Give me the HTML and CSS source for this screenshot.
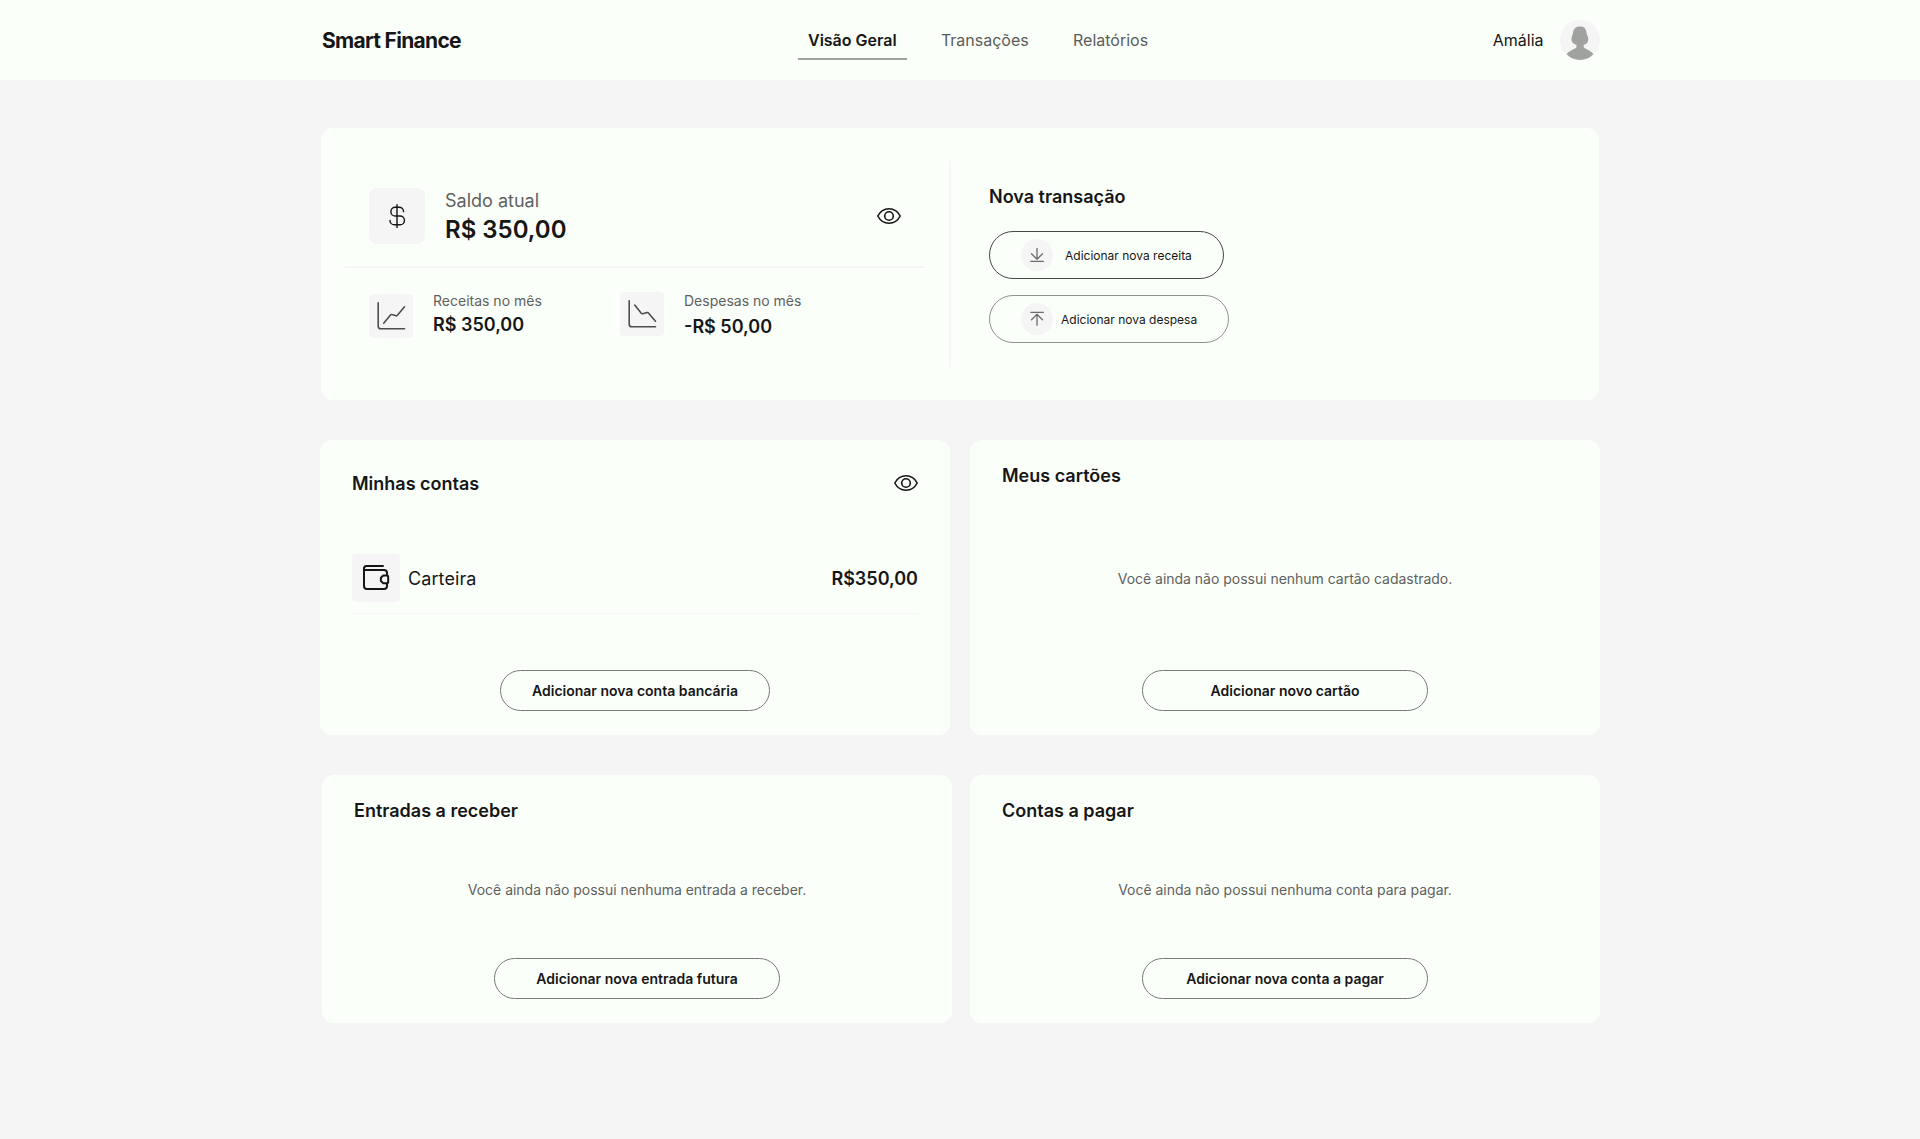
FILE: index.html
```html
<!DOCTYPE html>
<html lang="pt-BR">
<head>
  <meta charset="utf-8">
  <title>Smart Finance</title>
  <link rel="stylesheet" href="styles.css">
</head>
<body>
  <header class="topbar">
    <div class="topbar-inner">
      <div class="brand">Smart Finance</div>
      <nav class="nav">
        <a class="nav-link active">Visão Geral</a>
        <a class="nav-link">Transações</a>
        <a class="nav-link">Relatórios</a>
      </nav>
      <div class="user">
        <span>Amália</span>
        <svg class="avatar" width="40" height="40" viewBox="0 0 40 40">
          <circle cx="20" cy="20" r="20" fill="#f5f5f5"/>
          <path fill="#9fa29e" d="M19.6 6.6c3.600-.5 6.200 1.500 6.700 5 .2 1.800.6 3.300 1.500 5 .9 2.200.7 4.400-.5 6.200-.8 1.100-2 1.800-3.600 2v1.600c0 1 .7 1.700 1.700 2.200l4.100 2.200c1.700.8 3 1.900 3.900 3.500A20 20 0 0 1 20 40 20 20 0 0 1 6.600 34.300c.9-1.600 2.300-2.700 4-3.500l4.300-2.200c1-.5 1.600-1.200 1.600-2.200v-1.600c-1.600-.2-2.900-.9-3.800-2-1.400-1.900-1.600-4.100-.8-6.200.8-1.800 1-3.200 1.300-5 .5-3 2.900-5.100 6.400-5z"/>
        </svg>
      </div>
    </div>
  </header>

  <main class="page">
    <section class="card summary">
      <div class="overview">
        <div class="balance">
          <div class="tile tile-lg">
            <svg width="28" height="28" viewBox="0 0 256 256" fill="none" stroke="#161616" stroke-width="13" stroke-linecap="round" stroke-linejoin="round">
              <path d="M128 24v208M188 88a40 40 0 0 0-40-40h-36a40 40 0 0 0 0 80h44a40 40 0 0 1 0 80h-52a40 40 0 0 1-40-40"/>
            </svg>
          </div>
          <div class="balance-text">
            <div class="balance-label">Saldo atual</div>
            <div class="balance-value">R$ 350,00</div>
          </div>
          <svg class="eye" width="24" height="16" viewBox="0 0 24 16" fill="none" stroke="#161616" stroke-width="1.600">
            <path d="M.8 8C3.200 3.400 7.200.8 12 .8S20.800 3.400 23.200 8C20.800 12.600 16.800 15.200 12 15.200S3.200 12.600.8 8z" stroke-linejoin="round"/>
            <circle cx="12" cy="8" r="4.300"/>
          </svg>
        </div>
        <div class="stats">
          <div class="stat stat-income">
            <div class="tile tile-md">
              <svg width="44" height="44" viewBox="0 0 44 44" fill="none" stroke="#4c4e4b" stroke-width="1.600" stroke-linecap="round" stroke-linejoin="round">
                <path d="M9.200 8.700v23.500a2.600 2.600 0 0 0 2.600 2.600h23.700"/>
                <path d="M14.700 29.200l6.800-8.200q.6-.7 1.500-.4l4 1.200q.8.200 1.400-.5l7.100-8.500"/>
              </svg>
            </div>
            <div class="stat-text">
              <div class="stat-label">Receitas no mês</div>
              <div class="stat-value">R$ 350,00</div>
            </div>
          </div>
          <div class="stat stat-expense">
            <div class="tile tile-md">
              <svg width="44" height="44" viewBox="0 0 44 44" fill="none" stroke="#4c4e4b" stroke-width="1.600" stroke-linecap="round" stroke-linejoin="round">
                <path d="M9.200 8.700v23.500a2.600 2.600 0 0 0 2.600 2.600h23.700"/>
                <path d="M14.700 13l6.600 8.200q.6.700 1.500.5l4.200-1.200q.9-.2 1.400.5l7.100 8.200"/>
              </svg>
            </div>
            <div class="stat-text">
              <div class="stat-label">Despesas no mês</div>
              <div class="stat-value">-R$ 50,00</div>
            </div>
          </div>
        </div>
      </div>
      <div class="new-entry">
        <h2 class="title">Nova transação</h2>
        <button class="action action-income">
          <svg width="32" height="32" viewBox="0 0 32 32" fill="none" stroke="#6b6d6a" stroke-width="1.300" stroke-linecap="round" stroke-linejoin="round">
            <circle cx="16" cy="16" r="16" fill="#f5f5f5" stroke="none"/>
            <path d="M16 9.300v11M10.500 14.800l5.500 5.500 5.500-5.500M9.800 22.300h12.600"/>
          </svg>
          <span>Adicionar nova receita</span>
        </button>
        <button class="action action-expense">
          <svg width="32" height="32" viewBox="0 0 32 32" fill="none" stroke="#6b6d6a" stroke-width="1.300" stroke-linecap="round" stroke-linejoin="round">
            <circle cx="16" cy="16" r="16" fill="#f5f5f5" stroke="none"/>
            <path d="M16 22.300v-11M10.500 16.800l5.500-5.500 5.500 5.500M9.800 9.300h12.600"/>
          </svg>
          <span>Adicionar nova despesa</span>
        </button>
      </div>
    </section>

    <div class="row row-accounts">
      <section class="card panel accounts">
        <div class="panel-head">
          <h2 class="title">Minhas contas</h2>
          <svg class="eye" width="24" height="16" viewBox="0 0 24 16" fill="none" stroke="#161616" stroke-width="1.600">
            <path d="M.8 8C3.200 3.400 7.200.8 12 .8S20.800 3.400 23.200 8C20.800 12.600 16.800 15.200 12 15.200S3.200 12.600.8 8z" stroke-linejoin="round"/>
            <circle cx="12" cy="8" r="4.300"/>
          </svg>
        </div>
        <div class="account">
          <div class="tile tile-wallet">
            <svg width="48" height="48" viewBox="0 0 48 48" fill="none" stroke="#161616" stroke-width="2" stroke-linecap="round" stroke-linejoin="round">
              <path d="M31 12H14.500a2.500 2.500 0 0 0-2.500 2.500v17.500a3 3 0 0 0 3 3h17a3 3 0 0 0 3-3v-2.500M12 16h20a3 3 0 0 1 3 3v2.300"/>
              <path d="M31.300 21.500h3.700a1.200 1.200 0 0 1 1.200 1.200v5.300a1.200 1.200 0 0 1-1.200 1.200h-3.700l-2.400-2.200v-3.300z"/>
            </svg>
          </div>
          <span class="account-name">Carteira</span>
          <span class="account-value">R$350,00</span>
        </div>
        <button class="pill pill-bank">Adicionar nova conta bancária</button>
      </section>
      <section class="card panel cards">
        <h2 class="title">Meus cartões</h2>
        <p class="empty">Você ainda não possui nenhum cartão cadastrado.</p>
        <button class="pill">Adicionar novo cartão</button>
      </section>
    </div>

    <div class="row row-future">
      <section class="card panel">
        <h2 class="title">Entradas a receber</h2>
        <p class="empty">Você ainda não possui nenhuma entrada a receber.</p>
        <button class="pill">Adicionar nova entrada futura</button>
      </section>
      <section class="card panel">
        <h2 class="title">Contas a pagar</h2>
        <p class="empty">Você ainda não possui nenhuma conta para pagar.</p>
        <button class="pill">Adicionar nova conta a pagar</button>
      </section>
    </div>
  </main>
</body>
</html>
```
FILE: styles.css
```css
* {
  box-sizing: border-box;
}

body {
  margin: 0;
  min-height: 1139px;
  background: #f5f5f5;
  color: #161616;
  font-family: Inter, "Liberation Sans", sans-serif;
}

h2,
p {
  margin: 0;
}

svg {
  display: block;
  flex: none;
}

button {
  background: none;
  color: inherit;
  font-family: inherit;
  white-space: nowrap;
}

/* Header */
.topbar {
  height: 80px;
  background: #fbfffa;
}

.topbar-inner {
  display: grid;
  grid-template-columns: 478px 1fr auto;
  align-items: center;
  width: 1280px;
  height: 80px;
  margin: 0 auto;
}

.brand {
  padding: 2px 0 0 2px;
  font-size: 21px;
  line-height: 26px;
  font-weight: 700;
  letter-spacing: -0.700px;
}

.nav {
  display: flex;
  gap: 24.300px;
}

.nav-link {
  height: 40px;
  padding: 10px 10px 0;
  border-bottom: 2px solid transparent;
  color: #5a5c59;
  font-size: 16px;
  line-height: 20px;
}

.nav-link.active {
  border-color: #9fa39e;
  color: #161616;
  font-weight: 600;
}

.user {
  display: flex;
  align-items: center;
  gap: 16.500px;
  font-size: 16px;
  line-height: 20px;
}

/* Page layout */
.page {
  display: flex;
  flex-direction: column;
  gap: 40px;
  width: 1280px;
  margin: 48px auto 0;
}

.card {
  background: #fbfffa;
  border-radius: 12px;
}

.title {
  margin-bottom: -1px;
  padding-top: 1px;
  font-size: 18px;
  line-height: 22px;
  font-weight: 600;
}

.tile {
  display: flex;
  align-items: center;
  justify-content: center;
  flex: none;
  background: #f5f5f5;
  border-radius: 4px;
}

/* Summary */
.summary {
  display: flex;
  height: 272px;
  margin: 0 1px;
  padding: 33px 24px;
}

.overview {
  width: 606px;
  padding: 27px 24px 0 0;
  border-right: 2px solid #f5f5f5;
}

.balance {
  display: flex;
  align-items: center;
  height: 80px;
  padding: 0 24px 22px;
  border-bottom: 2px solid #f5f5f5;
}

.tile-lg {
  width: 56px;
  height: 56px;
  border-radius: 8px;
}

.balance-text {
  flex: 1;
  padding: 1px 0 0 20px;
}

.balance-label {
  color: #5f615e;
  font-size: 18px;
  line-height: 22px;
}

.balance-value {
  margin-top: 3px;
  font-size: 24px;
  line-height: 29px;
  font-weight: 600;
}

.stats {
  display: flex;
  padding: 24px 24px 0;
}

.stat {
  display: flex;
  gap: 20px;
  width: 251px;
}

.tile-md {
  width: 44px;
  height: 44px;
}

.stat-income .tile-md {
  margin-top: 2px;
}

.stat-label {
  color: #5f615e;
  font-size: 14px;
  line-height: 17px;
}

.stat-value {
  margin-top: 5px;
  font-size: 18px;
  line-height: 22px;
  font-weight: 600;
}

.stat-expense .stat-value {
  margin-top: 7px;
}

.new-entry {
  display: flex;
  flex-direction: column;
  align-items: flex-start;
  padding: 24px 0 0 38px;
}

.action {
  display: flex;
  align-items: center;
  height: 48px;
  padding: 0 31px;
  border: 1px solid #474947;
  border-radius: 24px;
  font-size: 12px;
  line-height: 15px;
}

.action-income {
  width: 235px;
  gap: 12px;
  margin-top: 24px;
}

.action-expense {
  width: 240px;
  gap: 8px;
  margin-top: 16px;
  border-color: #8f928e;
}

/* Panels */
.row {
  display: flex;
  justify-content: space-between;
}

.row-accounts {
  height: 295px;
}

.row-future {
  height: 248px;
  padding-left: 2px;
}

.panel {
  display: flex;
  flex-direction: column;
  width: 630px;
  padding: 24px 32px;
}

.panel-head {
  display: flex;
  align-items: center;
  justify-content: space-between;
  height: 22px;
  margin-top: 8px;
}

.account {
  display: flex;
  align-items: center;
  height: 60px;
  margin-top: 60px;
  padding-bottom: 11px;
  border-bottom: 1px solid #f5f5f5;
  font-size: 18px;
  line-height: 22px;
}

.tile-wallet {
  width: 48px;
  height: 48px;
}

.account-name {
  flex: 1;
  padding: 2px 0 0 8px;
  letter-spacing: 0.100px;
}

.account-value {
  padding-top: 2px;
  font-weight: 600;
}

.empty {
  margin-top: 60px;
  color: #5f615e;
  font-size: 14px;
  line-height: 17px;
  letter-spacing: -0.020px;
  text-align: center;
}

.cards .empty {
  margin-top: 84px;
}

.pill {
  align-self: center;
  width: 286px;
  height: 41px;
  margin-top: auto;
  padding: 0;
  border: 1px solid #777a77;
  border-radius: 20.500px;
  font-size: 14px;
  font-weight: 600;
}

.pill-bank {
  width: 270px;
}
```
